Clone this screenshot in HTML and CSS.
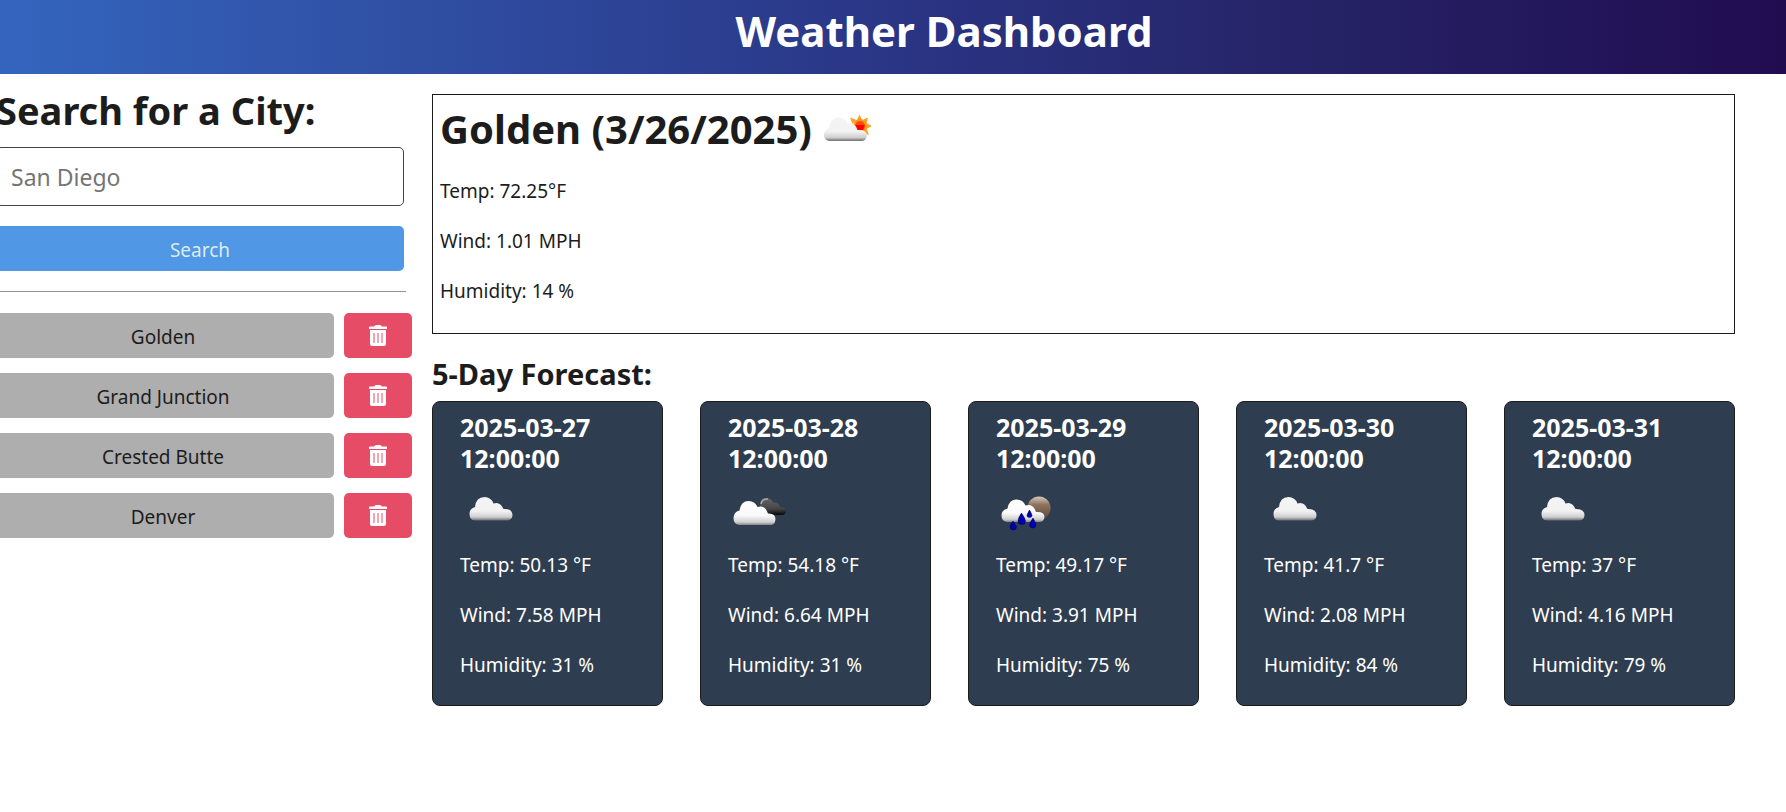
FILE: index.html
```html
<!DOCTYPE html>
<html lang="en">
<head>
<meta charset="utf-8">
<meta name="viewport" content="width=device-width, initial-scale=1">
<title>Weather Dashboard</title>
<link rel="stylesheet" href="styles.css">
</head>
<body>
<svg class="defs" aria-hidden="true">
  <defs>
    <linearGradient id="white" x1="0" y1="0" x2="0" y2="1">
      <stop offset="0" stop-color="#f4f4f4"/><stop offset=".6" stop-color="#f2f2f2"/><stop offset=".85" stop-color="#cfcfcf"/><stop offset="1" stop-color="#6f6f6f"/>
    </linearGradient>
    <linearGradient id="bright" x1="0" y1="0" x2="0" y2="1">
      <stop offset="0" stop-color="#fff"/><stop offset=".6" stop-color="#fafafa"/><stop offset=".88" stop-color="#d0d0d0"/><stop offset="1" stop-color="#858585"/>
    </linearGradient>
    <linearGradient id="dark" x1="0" y1="0" x2="0" y2="1">
      <stop offset="0" stop-color="#666"/><stop offset=".65" stop-color="#444"/><stop offset="1" stop-color="#050505"/>
    </linearGradient>
    <linearGradient id="moon" x1="0" y1="0" x2="0" y2="1">
      <stop offset="0" stop-color="#d9c8bc"/><stop offset=".35" stop-color="#8f7460"/><stop offset="1" stop-color="#5c4636"/>
    </linearGradient>
    <radialGradient id="sun"><stop offset="0" stop-color="#f00"/><stop offset=".5" stop-color="#ff2a08"/><stop offset="1" stop-color="#ff9a20"/></radialGradient>
    <symbol id="trash" viewBox="0 0 18 21">
      <path fill="#fff" fill-rule="evenodd" d="M0 2.2Q0 1.5.8 1.5H5.2L6 .5Q6.3 0 7 0H11Q11.700 0 12 .5L12.800 1.500H17.200Q18 1.500 18 2.200V4H0ZM1 5H17V19Q17 21 15 21H3Q1 21 1 19ZM4.500 8V18H5.500V8ZM8.500 8V18H9.500V8ZM12.500 8V18H13.500V8Z"/>
    </symbol>
    <symbol id="cloud" viewBox="0 0 60 50">
      <path fill="url(#white)" d="M15 36.500Q9.500 36 9.500 30Q9.500 24.500 15 23Q16 13 24.500 13Q31 13 33.500 19.500Q40 17 43.500 25Q52.500 24.500 52.500 31.500Q52 36 47.500 36.500Z"/>
    </symbol>
    <symbol id="broken" viewBox="0 0 60 50">
      <path fill="url(#dark)" d="M32 31V20Q33 14 38 14Q43 14 45 18.500Q51 18 52 23Q58 23 58 28Q57 31 54 31Z"/>
      <path fill="none" stroke="#aaa" stroke-width="1.500" d="M33 20Q34 14.500 40 15"/>
      <path fill="url(#bright)" d="M11 41Q5.500 40 5.500 34Q5.500 28 11.500 26.500Q13 17 20.500 17Q27 17 29.500 23Q37 20.500 40 29.500Q47.500 29 47.500 35.500Q47 40.500 43 41Z"/>
    </symbol>
    <symbol id="rain" viewBox="0 0 60 50">
      <circle cx="43" cy="24" r="11.500" fill="url(#moon)"/>
      <path fill="url(#bright)" d="M11 38Q5.500 37 5.500 31.500Q5.500 26 11.500 24.500Q13 15.500 20.500 15.500Q27 15.500 29.500 21.500Q37 19 40 28Q48.500 27.500 48.500 33Q48 38 43 38Z"/>
      <g fill="#0000b0" stroke="#000050" stroke-width=".5">
        <path d="M25.500 29Q22 34 22 37Q22 40.500 25.500 40.500Q29.500 40.500 29.500 37Q29 34 25.500 29Z"/>
        <path d="M33.500 26Q31 30 31 31.500Q31 33.500 33.500 33.500Q36 33.500 36 31.500Q36 30 33.500 26Z"/>
        <path d="M17 37Q14 41 14 43Q14 46 17 46Q20.500 46 20.500 43Q20 41 17 37Z"/>
        <path d="M37 34Q33.500 39 33.500 41Q33.500 44 37 44Q40 44 40 41Q40 39 37 34Z"/>
      </g>
    </symbol>
    <symbol id="few" viewBox="0 0 60 50">
      <path fill="#ffa01f" d="M41.500 10.500L44 16H39ZM50 13.500L48.500 20L44.500 16ZM54 22L48 25V19ZM51 31L44.500 28.500L48.500 24.500ZM32 13.500L38.500 16L34.500 20ZM42 33L39 28H45Z"/>
      <circle cx="42" cy="22" r="7" fill="#ff981c"/>
      <circle cx="42" cy="22" r="5" fill="#ff4a0c"/>
      <path fill="#f00" d="M37 21H46.500L45 26H39Z"/>
      <path fill="url(#white)" d="M11 37Q6 36 6 31Q6 26 11 24Q12 13.500 21 13.500Q27.500 13.500 29.500 20Q36.500 17 39.500 26Q49 25.500 49 31.500Q48 37 43.500 37Z"/>
    </symbol>
  </defs>
</svg>
<header class="banner"><h1 class="banner-title">Weather Dashboard</h1></header>
<main class="page">
  <aside class="sidebar">
    <form class="search">
      <label class="search-title" for="city">Search for a City:</label>
      <input class="search-input" id="city" type="text" placeholder="San Diego">
      <button class="button search-button" type="button">Search</button>
    </form>
    <hr class="rule">
    <ul class="history">
      <li class="history-row"><button class="button city" type="button">Golden</button><button class="button delete" type="button" aria-label="Delete Golden"><svg class="trash"><use href="#trash"/></svg></button></li>
      <li class="history-row"><button class="button city" type="button">Grand Junction</button><button class="button delete" type="button" aria-label="Delete Grand Junction"><svg class="trash"><use href="#trash"/></svg></button></li>
      <li class="history-row"><button class="button city" type="button">Crested Butte</button><button class="button delete" type="button" aria-label="Delete Crested Butte"><svg class="trash"><use href="#trash"/></svg></button></li>
      <li class="history-row"><button class="button city" type="button">Denver</button><button class="button delete" type="button" aria-label="Delete Denver"><svg class="trash"><use href="#trash"/></svg></button></li>
    </ul>
  </aside>
  <div class="content">
    <section class="today">
      <h2 class="today-title">Golden (3/26/2025) <svg class="weather"><use href="#few"/></svg></h2>
      <p class="reading">Temp: 72.25°F</p>
      <p class="reading">Wind: 1.01 MPH</p>
      <p class="reading">Humidity: 14 %</p>
    </section>
    <h3 class="forecast-title">5-Day Forecast:</h3>
    <section class="forecast">
      <article class="card"><h4 class="card-title">2025-03-27 12:00:00</h4><svg class="weather"><use href="#cloud"/></svg><p class="reading">Temp: 50.13 °F</p><p class="reading">Wind: 7.58 MPH</p><p class="reading">Humidity: 31 %</p></article>
      <article class="card"><h4 class="card-title">2025-03-28 12:00:00</h4><svg class="weather"><use href="#broken"/></svg><p class="reading">Temp: 54.18 °F</p><p class="reading">Wind: 6.64 MPH</p><p class="reading">Humidity: 31 %</p></article>
      <article class="card"><h4 class="card-title">2025-03-29 12:00:00</h4><svg class="weather"><use href="#rain"/></svg><p class="reading">Temp: 49.17 °F</p><p class="reading">Wind: 3.91 MPH</p><p class="reading">Humidity: 75 %</p></article>
      <article class="card"><h4 class="card-title">2025-03-30 12:00:00</h4><svg class="weather"><use href="#cloud"/></svg><p class="reading">Temp: 41.7 °F</p><p class="reading">Wind: 2.08 MPH</p><p class="reading">Humidity: 84 %</p></article>
      <article class="card"><h4 class="card-title">2025-03-31 12:00:00</h4><svg class="weather"><use href="#cloud"/></svg><p class="reading">Temp: 37 °F</p><p class="reading">Wind: 4.16 MPH</p><p class="reading">Humidity: 79 %</p></article>
    </section>
  </div>
</main>
</body>
</html>
```
FILE: styles.css
```css
* { box-sizing: border-box; margin: 0; padding: 0; }

body {
  background: #fff;
  color: #1c1c1c;
  font: 19px/30px "Segoe UI", "Noto Sans", "Open Sans", sans-serif;
  overflow-x: hidden;
}

.defs { position: absolute; width: 0; height: 0; }

.banner {
  padding: 4px 0 16px 102px;
  background: linear-gradient(to right, #3465be, #2f4da1 25%, #2a3585 50%, #262468 72%, #210c50);
  color: #fff;
  text-align: center;
}
.banner-title { font-size: 42px; line-height: 54px; }

.page {
  display: flex;
  align-items: flex-start;
  gap: 20px;
  margin-left: -8px;
  padding: 20px 51px 20px 0;
}

.sidebar { flex: 0 0 420px; }
.search { display: flex; flex-direction: column; padding: 0 8px 0 4px; }
.search-title { font-size: 38px; font-weight: 700; line-height: 32px; margin-bottom: 21px; }
.search-input {
  height: 59px;
  padding: 0 14px;
  border: 1px solid #444;
  border-radius: 5px;
  background: #fff;
  color: inherit;
  font: inherit;
  font-size: 23px;
}
.search-input::placeholder { color: #757575; opacity: 1; }

.button {
  height: 45px;
  padding-top: 2px;
  border: 0;
  border-radius: 5px;
  color: inherit;
  font: inherit;
  cursor: pointer;
}
.search-button { margin-top: 20px; background: #5097e6; color: #dcebf0; }

.rule { height: 1px; margin: 20px 6px 21px 0; border: 0; background: #8f9393; }

.history { display: flex; flex-direction: column; gap: 15px; list-style: none; }
.history-row { display: flex; gap: 10px; }
.city { flex: 1; background: #aeaeae; }
.delete { display: flex; align-items: center; justify-content: center; width: 68px; padding: 0; background: #e74c66; }
.trash { width: 18px; height: 21px; }

.content { flex: 1; min-width: 0; }

.today { padding: 7px; border: 1px solid #1c1c1c; }
.today-title { display: flex; align-items: center; gap: 6px; font-size: 40px; line-height: 54px; margin-bottom: 20px; }
.weather { display: block; width: 60px; height: 50px; }
.reading { margin-bottom: 20px; }

.forecast-title { margin: 21px 0 8px; font-size: 29px; line-height: 38px; }
.forecast { display: grid; grid-template-columns: repeat(5, 1fr); gap: 37px; }
.card {
  padding: 10px 27px 5px;
  border: 1px solid #1c1c1c;
  border-radius: 8px;
  background: #2e3e50;
  color: #fff;
}
.card-title { font-size: 25px; line-height: 31px; }
.card .weather { margin: 10px 0 16px; }
```
